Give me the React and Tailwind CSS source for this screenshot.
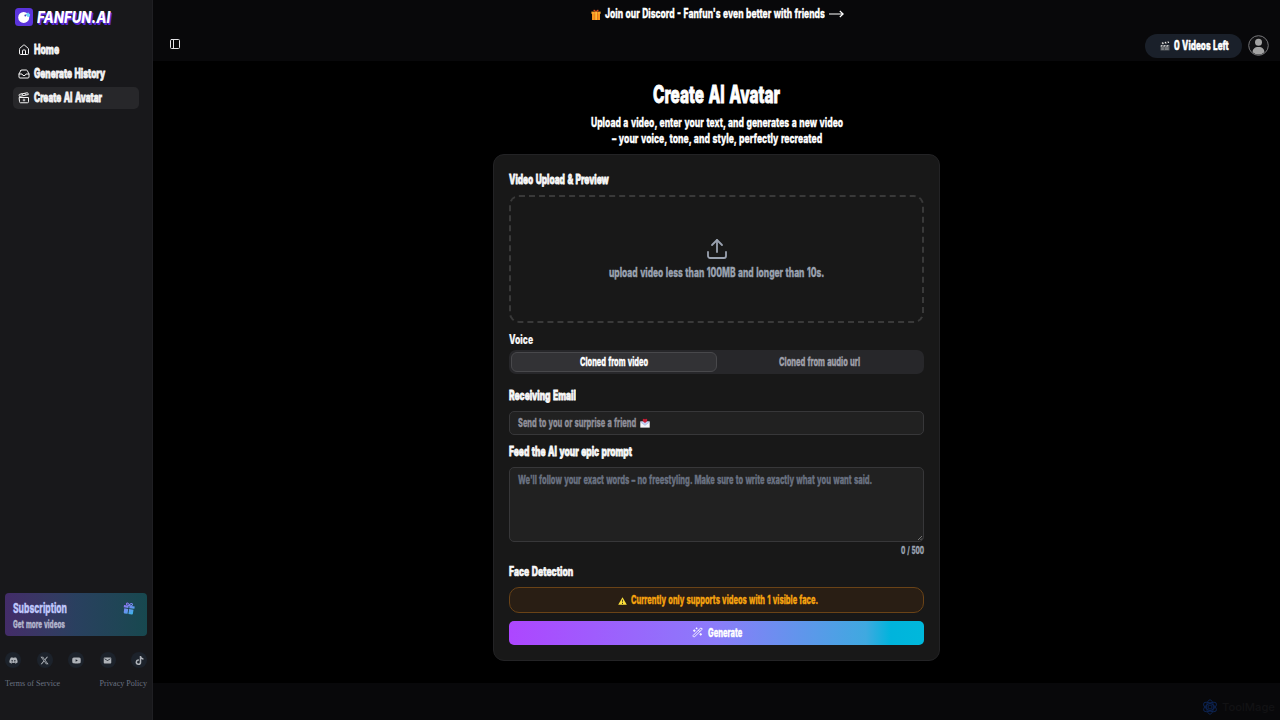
import React, { useLayoutEffect, useRef } from "react";
import { House, Inbox, PanelLeft, Upload, WandSparkles } from "lucide-react";
import { FaDiscord, FaYoutube, FaTiktok, FaXTwitter } from "react-icons/fa6";
import { MdEmail } from "react-icons/md";

// Heavy condensed text, squeezed to the given width
const Cond = ({ w, className = "", children }) => {
	const ref = useRef(null);

	useLayoutEffect(() => {
		const el = ref.current;
		el.style.transform = `scaleX(${w / el.offsetWidth})`;
	}, [w]);

	return (
		<span
			className={`block shrink-0 whitespace-nowrap font-['Inter',sans-serif] font-extrabold [word-spacing:0.08em] ${className}`}
			style={{ width: w }}
		>
			<span ref={ref} className="inline-block origin-left align-top">
				{children}
			</span>
		</span>
	);
};

const Logo = () => (
	<svg viewBox="0 0 18 18" className="w-[18px] h-[18px] shrink-0">
		<rect width="18" height="18" rx="3.5" fill="#5b34dc" />
		<circle cx="8.7" cy="9.4" r="5.5" fill="#fff" />
		<path d="M10.6 6.6l2.6-2.4.9 1.6 1 .3-.2 2.4-2.2.6z" fill="#6fd3f7" />
		<circle cx="10.3" cy="7.5" r=".9" fill="#4b3bb0" />
	</svg>
);

const MovieIcon = ({ className }) => (
	<svg
		viewBox="0 0 24 24"
		width="12"
		height="12"
		fill="none"
		stroke="currentColor"
		strokeWidth="2"
		strokeLinecap="round"
		strokeLinejoin="round"
		className={className}
	>
		<path d="M3 11h18v8.5a2 2 0 0 1-2 2H5a2 2 0 0 1-2-2z" />
		<path d="M2.6 8.2L2.2 6.6a1.6 1.6 0 0 1 1.2-2L18 1.6a1.6 1.6 0 0 1 2 1.2l.4 1.6z" />
		<path d="M7.5 3.8l2.6 2.8M13.5 2.6l2.6 2.8" />
		<path d="M12 13.4l.9 1.9 1.9.9-1.9.9-.9 1.9-.9-1.9-1.9-.9 1.9-.9z" fill="currentColor" strokeWidth=".5" />
	</svg>
);

const GiftEmoji = () => (
	<svg viewBox="0 0 10 11" className="w-[10px] h-[11px] shrink-0">
		<path d="M1 4h8v7H1z" fill="#f7941d" />
		<path d="M.4 2.6h9.2v2.2H.4z" fill="#fba82b" />
		<path d="M3.8 2.6h.6v8.4h-.6zM5.8 2.6h.6v8.4h-.6z" fill="#d3481c" />
		<path d="M4.4 2.6h1.4v8.4H4.4z" fill="#ffc83d" />
		<path d="M5 2.6C3.5 2.8 2 2 2.4 1.1 3 .2 4.5 1 5 2.4 5.5 1 7 .2 7.6 1.1 8 2 6.5 2.8 5 2.6z" fill="#d3481c" />
	</svg>
);

const ClapperEmoji = () => (
	<svg viewBox="0 0 10 10" className="w-[10px] h-[10px] shrink-0">
		<path d="M.5 4h9v5.5h-9z" fill="#55585c" />
		<path d="M.3 1.7L9 .3l.4 1.7L.7 3.6z" fill="#303236" />
		<path d="M1.8 1.5l1.3-.2.7 1.6-1.3.3zM4.6 1l1.3-.2.7 1.6-1.3.2zM7.4.6l1.2-.2.6 1.5-1.1.2z" fill="#e8e8e8" />
		<path d="M1 4.3h1.6l-.8 1.2H.6zM4 4.3h1.6l-.8 1.2H3.2zM7 4.3h1.6l-.8 1.2H6.2z" fill="#e8e8e8" />
		<path d="M1.3 7h2.5M5 7h3.6M1.3 8.3h2.5M5 8.3h3.6" stroke="#b9bcc0" strokeWidth=".5" />
	</svg>
);

const LoveLetter = () => (
	<svg viewBox="0 0 10 10" className="w-[10px] h-[10px] shrink-0">
		<path d="M.3 3.6h9.4v6H.3z" fill="#f5f6fa" />
		<path d="M.3 3.6L5 7.3l4.7-3.7z" fill="#c5d0f2" />
		<path d="M.3 3.8L5 7.4l4.7-3.6" fill="none" stroke="#8d9fd6" strokeWidth=".5" />
		<path d="M5 5C3.6 3.9 2.5 3 2.7 1.8 3 .6 4.5.6 5 1.6 5.5.6 7 .6 7.3 1.8 7.5 3 6.4 3.9 5 5z" fill="#c81e36" />
	</svg>
);

const Warning = () => (
	<svg viewBox="0 0 9 8" className="w-[9px] h-[8px] shrink-0">
		<path d="M4.5.2L8.8 7.8H.2z" fill="#fde03a" />
		<path d="M4.1 2.7h.9l-.2 2.8h-.5zM4.1 6h.9v.9h-.9z" fill="#222" />
	</svg>
);

const GiftIcon = () => (
	<svg viewBox="0 0 12 13" className="w-[12px] h-[13px] shrink-0">
		<defs>
			<linearGradient id="gift" gradientUnits="userSpaceOnUse" x1="1" y1="1" x2="11" y2="12">
				<stop offset="0" stopColor="#a06bf5" />
				<stop offset="1" stopColor="#35b8e8" />
			</linearGradient>
		</defs>
		<g transform="rotate(8 6 6.5)">
			<path fill="url(#gift)" d="M.6 3.8h4.7v2.3H.6zM6.2 3.8h5.2v2.3H6.2zM1.3 7h4v5h-3a1 1 0 0 1-1-1zM6.2 7h4.4v4a1 1 0 0 1-1 1H6.2z" />
			<path
				fill="none"
				stroke="url(#gift)"
				strokeWidth="1"
				d="M5.8 3.7C3.9 3.7 2.6 3 2.8 2 3.2.8 5 1.2 5.8 3.2 6.5 1.3 8.4.6 8.9 1.8 9.2 2.9 7.7 3.8 5.8 3.7z"
			/>
		</g>
	</svg>
);

const Watermark = () => (
	<div className="flex items-center gap-[4px] pr-[5px] text-[#121214]">
		<svg viewBox="0 0 16 16" className="w-4 h-4" fill="none" stroke="#0d2350" strokeWidth="1">
			<circle cx="8" cy="8" r="2" />
			<ellipse cx="8" cy="8" rx="3.4" ry="7.2" />
			<ellipse cx="8" cy="8" rx="3.4" ry="7.2" transform="rotate(60 8 8)" />
			<ellipse cx="8" cy="8" rx="3.4" ry="7.2" transform="rotate(120 8 8)" />
		</svg>
		<Cond w={53} className="text-[11px] font-medium">
			ToolMage
		</Cond>
	</div>
);

const MENU = [
	{ name: "Home", icon: House, w: 25 },
	{ name: "Generate History", icon: Inbox, w: 71 },
	{ name: "Create AI Avatar", icon: MovieIcon, w: 68, active: true },
];

const SOCIALS = [FaDiscord, FaXTwitter, FaYoutube, MdEmail, FaTiktok];

const Sidebar = () => {
	return (
		<aside className="w-[153px] shrink-0 h-full flex flex-col bg-[#18181b] border-r border-[#1f1f23]">
			<div className="flex items-center gap-[4px] h-[18px] mt-[8px] pl-[15px]">
				<Logo />
				<Cond
					w={73}
					className="text-[16px] leading-[18px] italic text-white [text-shadow:1px_1px_0_#5b2bd8,2px_2px_0_#5b2bd8]"
				>
					FANFUN.AI
				</Cond>
			</div>

			<nav className="mt-[13px] ml-[13px] w-[126px] flex flex-col gap-[2px]">
				{MENU.map(({ name, icon: Icon, w, active }) => (
					<a
						key={name}
						className={`h-[22px] flex items-center gap-[4px] pl-[5px] rounded-[5px] text-[#f4f4f5] ${
							active ? "bg-[#27272a]" : ""
						}`}
					>
						<Icon size={12} strokeWidth={2} className="shrink-0" />
						<Cond
							w={w}
							className="text-[12.5px] leading-[22px] font-black [-webkit-text-stroke:0.8px]"
						>
							{name}
						</Cond>
					</a>
				))}
			</nav>

			<div className="mt-auto h-[127px] px-[5px]">
				<div className="h-[43px] flex justify-between rounded-[4px] pl-[8px] pr-[12px] bg-linear-to-r from-[#432c69] via-[#29405f] to-[#17484f]">
					<div className="pt-[7px]">
						<Cond
							w={54}
							className="text-[13.5px] leading-[16px] text-[#bfc6fb] [-webkit-text-stroke:0.3px]"
						>
							Subscription
						</Cond>
						<Cond
							w={52}
							className="text-[10px] leading-[16px] text-[#b3b5cd] [-webkit-text-stroke:0.3px]"
						>
							Get more videos
						</Cond>
					</div>
					<div className="pt-[9px]">
						<GiftIcon />
					</div>
				</div>

				<div className="flex justify-between mt-[16px]">
					{SOCIALS.map((Icon, i) => (
						<span
							key={i}
							className="w-4 h-4 rounded-full bg-[#1c222b] grid place-items-center text-[#aeb2b8]"
						>
							<Icon size={9} />
						</span>
					))}
				</div>

				<div className="flex justify-between mt-[10px] font-['Liberation_Serif',serif] text-[8.1px] leading-[12px] text-[#6a7282]">
					<span>Terms of Service</span>
					<span>Privacy Policy</span>
				</div>
			</div>
		</aside>
	);
};

const Header = () => (
	<header className="h-[61px] bg-[#08080a]">
		<div className="h-[28px] flex items-center justify-center gap-[4px] pl-[1px] text-white">
			<GiftEmoji />
			<Cond w={220} className="text-[12.5px] leading-[28px] [-webkit-text-stroke:0.3px]">
				Join our Discord - Fanfun&apos;s even better with friends
			</Cond>
			<svg viewBox="0 0 15 8" className="w-[15px] h-[8px]" fill="none" stroke="#fff" strokeWidth="1.2">
				<path d="M0 4h14M10.8 1L14.2 4l-3.4 3" />
			</svg>
		</div>
		<div className="h-[33px] flex items-center justify-between pl-[16px] pr-[11px]">
			<PanelLeft size={12} strokeWidth={2} className="text-[#e4e4e7] mb-[1px]" />
			<div className="flex items-center gap-[6px] pt-[2px]">
				<div className="w-[97px] h-[24px] rounded-full bg-[#1a202a] flex items-center justify-center gap-[4px] pl-[2px] text-white">
					<ClapperEmoji />
					<Cond w={55} className="text-[12.5px] leading-[24px] [-webkit-text-stroke:0.5px]">
						0 Videos Left
					</Cond>
				</div>
				<svg viewBox="0 0 21 21" className="w-[21px] h-[21px]">
					<circle cx="10.5" cy="10.5" r="9.8" fill="#111113" stroke="#77777a" strokeWidth="1" />
					<circle cx="10.5" cy="7.2" r="3.5" fill="#a3a3a3" />
					<path d="M4.6 17.2c0-3.2 2-5.2 5.9-5.2s5.9 2 5.9 5.2a9 9 0 0 1-11.8 0z" fill="#a3a3a3" />
				</svg>
			</div>
		</div>
	</header>
);

const Heading = ({ w, className = "", children }) => (
	<Cond
		w={w}
		className={`text-[12.5px] leading-[16px] font-black text-[#f8f8f8] ${className}`}
	>
		{children}
	</Cond>
);

const AvatarForm = () => {
	return (
		<div className="w-[447px] h-[507px] mx-auto mt-[7px] rounded-[11px] border border-[#232325] bg-[#181818] px-[15px] pt-[17px]">
			<Heading w={100} className="[-webkit-text-stroke:0.8px]">
				Video Upload &amp; Preview
			</Heading>

			<div className="mt-[7px] h-[128px] rounded-[10px] border-2 border-dashed border-[#393939] flex flex-col items-center pt-[40px] text-[#99a1af]">
				<Upload size={24} strokeWidth={1.8} />
				<Cond w={215} className="text-[12.5px] leading-[16px] mt-[4px] [-webkit-text-stroke:0.3px]">
					upload video less than 100MB and longer than 10s.
				</Cond>
			</div>

			<Heading w={24} className="mt-[9px] [-webkit-text-stroke:0.2px]">
				Voice
			</Heading>
			<div className="mt-[2px] h-[24px] rounded-[7px] bg-[#27272a] p-[2px] grid grid-cols-2">
				<div className="rounded-[6px] border border-[#48484b] bg-[#323235] flex items-center justify-center text-white">
					<Cond w={68} className="text-[11.5px] leading-[18px] [-webkit-text-stroke:0.3px]">
						Cloned from video
					</Cond>
				</div>
				<div className="flex items-center justify-center text-[#9f9fa9]">
					<Cond w={81} className="text-[11.5px] leading-[18px] [-webkit-text-stroke:0.3px]">
						Cloned from audio url
					</Cond>
				</div>
			</div>

			<Heading w={67} className="mt-[14px] [-webkit-text-stroke:0.8px]">
				Receiving Email
			</Heading>
			<div className="mt-[7px] h-[24px] rounded-[5px] border border-[#373739] bg-[#212121] flex items-center gap-[4px] pl-[8px] text-[#8e8e98]">
				<Cond w={118} className="text-[11.5px] leading-[22px] [-webkit-text-stroke:0.3px]">
					Send to you or surprise a friend
				</Cond>
				<LoveLetter />
			</div>

			<Heading w={123} className="mt-[9px] [-webkit-text-stroke:0.8px]">
				Feed the AI your epic prompt
			</Heading>
			<div className="mt-[7px] h-[75px] rounded-[5px] border border-[#373739] bg-[#212121] pl-[8px] pt-[4px] flex flex-col justify-between">
				<Cond
					w={354}
					className="text-[11.5px] leading-[16px] text-[#6a7282] [-webkit-text-stroke:0.3px]"
				>
					We&apos;ll follow your exact words – no freestyling. Make sure to
					write exactly what you want said.
				</Cond>
				<svg viewBox="0 0 6 6" className="w-[6px] h-[6px] self-end" stroke="#8a8a8a" strokeWidth=".8">
					<path d="M1 5L5 1M3.5 5L5 3.5" />
				</svg>
			</div>
			<div className="flex justify-end text-[#99a1af]">
				<Cond w={23} className="text-[10px] leading-[16px] [-webkit-text-stroke:0.3px]">
					0 / 500
				</Cond>
			</div>

			<Heading w={64} className="mt-[6px] [-webkit-text-stroke:0.7px]">
				Face Detection
			</Heading>
			<div className="mt-[7px] h-[26px] rounded-[10px] border border-[#6a4317] bg-[#291e14] flex items-center justify-center gap-[4px] pl-[2px] text-[#f5a30f]">
				<div className="pt-[2px]">
					<Warning />
				</div>
				<Cond w={187} className="text-[11.5px] leading-[24px] [-webkit-text-stroke:0.3px]">
					Currently only supports videos with 1 visible face.
				</Cond>
			</div>

			<button className="mt-[8px] w-full h-[24px] rounded-[5px] flex items-center justify-center gap-[5px] pb-[1px] text-white bg-[linear-gradient(90deg,#ad46ff_0%,#8b7cfa_50%,#3fa9e0_86%,#00b4dc_92%,#00b8db_100%)]">
				<WandSparkles size={11} strokeWidth={2} />
				<Cond
					w={34}
					className="text-[11.5px] leading-[22px] text-left [-webkit-text-stroke:0.3px]"
				>
					Generate
				</Cond>
			</button>
		</div>
	);
};

const App = () => {
	return (
		<div className="w-[1280px] h-[720px] overflow-hidden flex bg-black">
			<Sidebar />
			<div className="flex-1 flex flex-col">
				<Header />
				<main className="h-[622px]">
					<div className="flex flex-col items-center pt-[21px] text-white">
						<Cond
							w={127}
							className="text-[24px] leading-[24px] pt-[1px] font-black mb-[8px] [-webkit-text-stroke:0.9px]"
						>
							Create AI Avatar
						</Cond>
						<Cond w={252} className="text-[12.5px] leading-[16px] [-webkit-text-stroke:0.3px]">
							Upload a video, enter your text, and generates a new video
						</Cond>
						<Cond w={210} className="text-[12.5px] leading-[16px] [-webkit-text-stroke:0.3px]">
							– your voice, tone, and style, perfectly recreated
						</Cond>
					</div>
					<AvatarForm />
				</main>
				<footer className="h-[37px] bg-[#08080a] flex justify-end items-center pt-[11px]">
					<Watermark />
				</footer>
			</div>
		</div>
	);
};

export default App;
